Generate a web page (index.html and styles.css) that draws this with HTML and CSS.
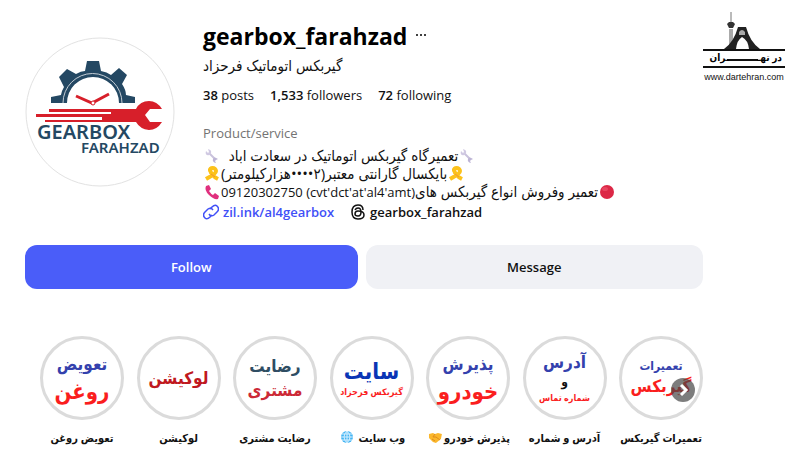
FILE: index.html
```
<!DOCTYPE html>
<html lang="en">
<head>
    <meta charset="UTF-8">
    <meta name="viewport" content="width=device-width, initial-scale=1.0">
    <title>gearbox_farahzad</title>
    <link rel="stylesheet" href="styles.css">
</head>
<body>
    <!-- Shared icons -->
    <svg class="sprite" aria-hidden="true">
        <symbol id="wrench" viewBox="0 0 16 16">
            <path d="M5 5L11 11" stroke="#c9c2dc" stroke-width="2"/>
            <path d="M2 3L4 5L5 4L4 1Q8 2 7 5Q6 8 3 7Q1 6 2 3Z" fill="#d0c9e2"/>
            <path d="M14 11Q10 8 9 11Q8 14 12 15L11 13L12 12Z" fill="#bdb4d5"/>
        </symbol>
        <symbol id="ribbon" viewBox="0 0 16 16">
            <path d="M6 5C5 1 12 1 12 5C12 8 7 10 2 13M6 4C7 8 10 11 14 13" fill="none" stroke="#fcc21b" stroke-width="4"/>
            <path d="M7 8L11 11" stroke="#f19534" stroke-width="1"/>
        </symbol>
        <symbol id="phone" viewBox="0 0 16 16">
            <path d="M2 2L5 1L7 5L5 7Q7 10 9 11L11 9L15 12L14 15Q10 16 5 11Q0 6 2 2Z" fill="#e0307e"/>
        </symbol>
        <symbol id="ball" viewBox="0 0 16 16">
            <circle cx="8" cy="8" r="7" fill="#dc2846"/>
            <ellipse cx="6" cy="5" rx="3" ry="2" fill="#e84560"/>
        </symbol>
        <symbol id="globe" viewBox="0 0 16 16">
            <circle cx="8" cy="8" r="6" fill="#45b5f3"/>
            <path d="M2 8H14M8 2V14M3 5H13M3 11H13M8 2Q2 8 8 14Q14 8 8 2" fill="none" stroke="#d5efff" stroke-width="1"/>
        </symbol>
        <symbol id="handshake" viewBox="0 0 16 16">
            <path d="M2 5L6 4L8 5L11 4L15 5L14 10L9 14L6 13L2 9Z" fill="#fbb72c"/>
            <path d="M8 5L6 8L9 8L13 11M5 10L8 12" fill="none" stroke="#dd8a1d" stroke-width="1"/>
        </symbol>
    </svg>

    <div class="page">
        <main class="profile">
            <header class="profile-header">
                <svg class="avatar" viewBox="0 0 150 150" role="img" aria-label="Gearbox Farahzad">
                    <circle cx="75" cy="75" r="74" fill="#fff" stroke="#e2e2e2"/>
                    <path d="M26 66V60L36 58Q37 53 39 50L34 40L42 32L51 37Q56 34 60 34L62 24H74L76 34Q82 35 86 38L94 31L102 38L97 47Q101 53 101 58L110 60V66H94A26 26 0 0 0 42 66Z" fill="#244863"/>
                    <path d="M38 66A29 29 0 0 1 97 66" fill="none" stroke="#c4cdd5"/>
                    <path d="M51 59L67 66L84 57" fill="none" stroke="#d71f2a" stroke-width="3"/>
                    <circle cx="68" cy="66" r="2" fill="#fff" stroke="#d71f2a"/>
                    <path d="M24 72H111Q115 64 124 64Q132 64 137 72H125L120 78L125 85H137Q132 93 124 93Q115 92 111 85H20V83H77V80H11V77H86V75H24Z" fill="#d71f2a"/>
                    <text x="12" y="102" class="avatar-top">GEARBOX</text>
                    <text x="56" y="116" class="avatar-bottom">FARAHZAD</text>
                </svg>

                <div class="details">
                    <div class="name-row">
                        <h1>gearbox_farahzad</h1>
                        <button class="more" aria-label="Options">
                            <svg viewBox="0 0 12 4"><circle cx="2" cy="2" r="1"/><circle cx="6" cy="2" r="1"/><circle cx="10" cy="2" r="1"/></svg>
                        </button>
                    </div>
                    <p class="full-name" lang="fa" dir="rtl">گیربکس اتوماتیک فرحزاد</p>
                    <ul class="stats">
                        <li><b>38</b> posts</li>
                        <li><b>1,533</b> followers</li>
                        <li><b>72</b> following</li>
                    </ul>
                    <p class="category">Product/service</p>
                    <div class="bio" lang="fa" dir="rtl">
                        <p><svg class="emoji"><use href="#wrench"/></svg>تعمیرگاه گیربکس اتوماتیک در سعادت اباد &nbsp;<svg class="emoji"><use href="#wrench"/></svg></p>
                        <p><svg class="emoji"><use href="#ribbon"/></svg>بایکسال گارانتی معتبر(٢••••هزارکیلومتر)<svg class="emoji"><use href="#ribbon"/></svg></p>
                        <p><svg class="emoji"><use href="#ball"/></svg>تعمیر وفروش انواع گیربکس های<span class="latin">(cvt'dct'at'al4'amt) 09120302750</span><svg class="emoji"><use href="#phone"/></svg></p>
                    </div>
                    <div class="links">
                        <a class="site-link" href="#">
                            <svg viewBox="0 0 16 16"><path d="M7 5L9 3Q12 0 14 2Q17 5 14 8L11 11Q8 13 6 10M9 11L7 13Q4 16 2 14Q-1 11 2 8L5 5Q8 3 10 6"/></svg>
                            zil.ink/al4gearbox
                        </a>
                        <a href="#">
                            <svg viewBox="0 0 16 16"><path d="M13 6Q13 1 8 1Q2 1 2 8Q2 15 8 15Q14 15 14 11Q14 7 8 7Q5 7 5 10Q5 12 8 12Q11 12 11 8Q11 4 8 4Q6 4 5 6"/></svg>
                            gearbox_farahzad
                        </a>
                    </div>
                </div>
            </header>

            <div class="actions">
                <button class="follow">Follow</button>
                <button class="message">Message</button>
            </div>

            <!-- Story highlights -->
            <section class="highlights" lang="fa">
                <ul>
                    <li>
                        <div class="ring" dir="rtl"><span class="medium blue">تعویض</span><span class="large red">روغن</span></div>
                        <p dir="rtl">تعویض روغن</p>
                    </li>
                    <li>
                        <div class="ring" dir="rtl"><span class="medium crimson">لوکیشن</span></div>
                        <p dir="rtl">لوکیشن</p>
                    </li>
                    <li>
                        <div class="ring" dir="rtl"><span class="medium slate">رضایت</span><span class="medium rose">مشتری</span></div>
                        <p dir="rtl">رضایت مشتری</p>
                    </li>
                    <li>
                        <div class="ring" dir="rtl"><span class="large royal">سایت</span><span class="tiny red">گیربکس فرحزاد</span></div>
                        <p dir="rtl">وب سایت&nbsp;<svg class="emoji"><use href="#globe"/></svg></p>
                    </li>
                    <li>
                        <div class="ring" dir="rtl"><span class="medium blue">پذیرش</span><span class="large red">خودرو</span></div>
                        <p dir="rtl">پذیرش خودرو<svg class="emoji"><use href="#handshake"/></svg></p>
                    </li>
                    <li>
                        <div class="ring" dir="rtl"><span class="medium blue">آدرس</span><span class="small">و</span><span class="tiny red">شماره تماس</span></div>
                        <p dir="rtl">آدرس و شماره</p>
                    </li>
                    <li>
                        <div class="ring" dir="rtl"><span class="small blue">تعمیرات</span><span class="medium red">گیربکس</span></div>
                        <p dir="rtl">تعمیرات گیربکس</p>
                    </li>
                </ul>
                <button class="next" aria-label="Next">
                    <svg viewBox="0 0 24 24"><path d="M10 7L15 12L10 17"/></svg>
                </button>
            </section>
        </main>

        <aside class="brand">
            <svg viewBox="0 0 82 56" role="img" aria-label="در تهران">
                <path d="M27 37V17M29 37V17" stroke="#555"/>
                <path d="M28 0V11" stroke="#777"/>
                <path d="M24 12L26 10H30L32 12L30 16H26Z" fill="#333"/>
                <path d="M21 37Q31 30 35 15H43Q47 30 57 37H46Q45 28 39 25Q34 28 33 37Z" fill="#222"/>
                <path d="M36 20Q39 16 42 20V23H36Z" fill="#aaa"/>
                <path d="M0 38H82M0 55H82" stroke="#111" stroke-width="2"/>
                <path d="M24 48H55" stroke="#111" stroke-width="2"/>
                <text x="79" y="49" class="brand-name" direction="rtl">در تهـ</text>
                <text x="26" y="49" class="brand-name" direction="rtl">ـران</text>
            </svg>
            <a href="#">www.dartehran.com</a>
        </aside>
    </div>
</body>
</html>
```

FILE: styles.css
```
* {
    box-sizing: border-box;
}
body {
    margin: 0;
    background: #fff;
    color: #111;
    font-family: "Open Sans", "DejaVu Sans Condensed", "DejaVu Sans", sans-serif;
    font-size: 13px;
    line-height: 18px;
}
h1, p, ul {
    margin: 0;
    padding: 0;
}
ul {
    list-style: none;
}
button {
    border: 0;
    padding: 0;
    font: inherit;
    cursor: pointer;
}
a {
    color: inherit;
    text-decoration: none;
}
.sprite {
    display: none;
}
.page {
    display: flex;
    align-items: flex-start;
    padding: 12px 14px 0 25px;
}
.profile {
    flex: 1;
    min-width: 0;
}
.profile-header {
    display: flex;
    align-items: flex-start;
    gap: 28px;
    padding-top: 8px;
}
.avatar {
    width: 150px;
    height: 150px;
    margin-top: 17px;
    flex: none;
}
.avatar text {
    font-family: "Noto Sans", sans-serif;
    fill: #244863;
    font-weight: 600;
}
.avatar-top {
    font-size: 20px;
}
.avatar-bottom {
    font-size: 15px;
}
.details {
    min-width: 0;
    white-space: nowrap;
}
.name-row {
    display: flex;
    gap: 8px;
    height: 32px;
}
h1 {
    font-size: 23px;
    line-height: 32px;
    color: #000;
}
.more {
    width: 12px;
    height: 30px;
    background: none;
}
.more svg {
    display: block;
    width: 12px;
    height: 4px;
}
.full-name {
    margin-top: 4px;
    font-size: 15px;
    text-align: left;
}
.stats {
    display: flex;
    gap: 16px;
    margin-top: 12px;
}
.stats b {
    font-weight: 600;
}
.category {
    margin-top: 20px;
    color: #737373;
}
.bio {
    margin-top: 4px;
    font-size: 15px;
    text-align: left;
}
.bio p {
    height: 18px;
}
.latin {
    font-size: 13px;
}
.emoji {
    width: 16px;
    height: 16px;
    margin: 0 1px;
    vertical-align: -3px;
}
.links {
    display: flex;
    gap: 16px;
    margin-top: 3px;
    font-weight: 600;
}
.links a {
    display: flex;
    align-items: center;
    gap: 4px;
}
.links svg {
    width: 16px;
    height: 16px;
    fill: none;
    stroke: currentColor;
    stroke-width: 1.5;
}
.site-link {
    color: #4150f7;
}
.actions {
    display: flex;
    gap: 8px;
    margin-top: 24px;
}
.actions button {
    height: 44px;
    border-radius: 12px;
    font-weight: 600;
}
.follow {
    flex: 333;
    background: #4a5df9;
    color: #fff;
}
.message {
    flex: 338;
    background: #f0f1f5;
    color: #111;
}
.highlights {
    position: relative;
    margin-top: 47px;
    padding-left: 15px;
    overflow: hidden;
}
.highlights ul {
    display: flex;
    justify-content: space-between;
}
.highlights li {
    width: 84px;
}
.ring {
    display: flex;
    flex-direction: column;
    align-items: center;
    justify-content: center;
    width: 84px;
    height: 84px;
    border: 3px solid #dbdbdb;
    border-radius: 50%;
    font-weight: bold;
    white-space: nowrap;
}
.highlights p {
    display: flex;
    justify-content: center;
    height: 18px;
    margin-top: 9px;
    font-size: 11px;
    font-weight: 600;
    white-space: nowrap;
}
.large {
    font-size: 22px;
    line-height: 28px;
}
.medium {
    font-size: 17px;
    line-height: 24px;
}
.small {
    font-size: 12px;
    line-height: 16px;
}
.tiny {
    font-size: 9px;
    line-height: 16px;
}
.blue {
    color: #3441ad;
}
.royal {
    color: #0a35b5;
}
.red {
    color: #fa1e1e;
}
.crimson {
    color: #c01820;
}
.slate {
    color: #2f4d63;
}
.rose {
    color: #cc2936;
}
.next {
    position: absolute;
    top: 42px;
    right: 8px;
    width: 24px;
    height: 24px;
    border-radius: 50%;
    background: rgba(70, 70, 70, 0.7);
}
.next svg {
    display: block;
    fill: none;
    stroke: #fff;
    stroke-width: 3;
}
.brand {
    width: 82px;
    flex: none;
    text-align: center;
}
.brand svg {
    display: block;
    width: 100%;
}
.brand-name {
    font-size: 10px;
    font-weight: bold;
}
.brand a {
    display: block;
    font-family: "Liberation Sans", Arial, sans-serif;
    font-size: 9px;
    line-height: 18px;
}
```
